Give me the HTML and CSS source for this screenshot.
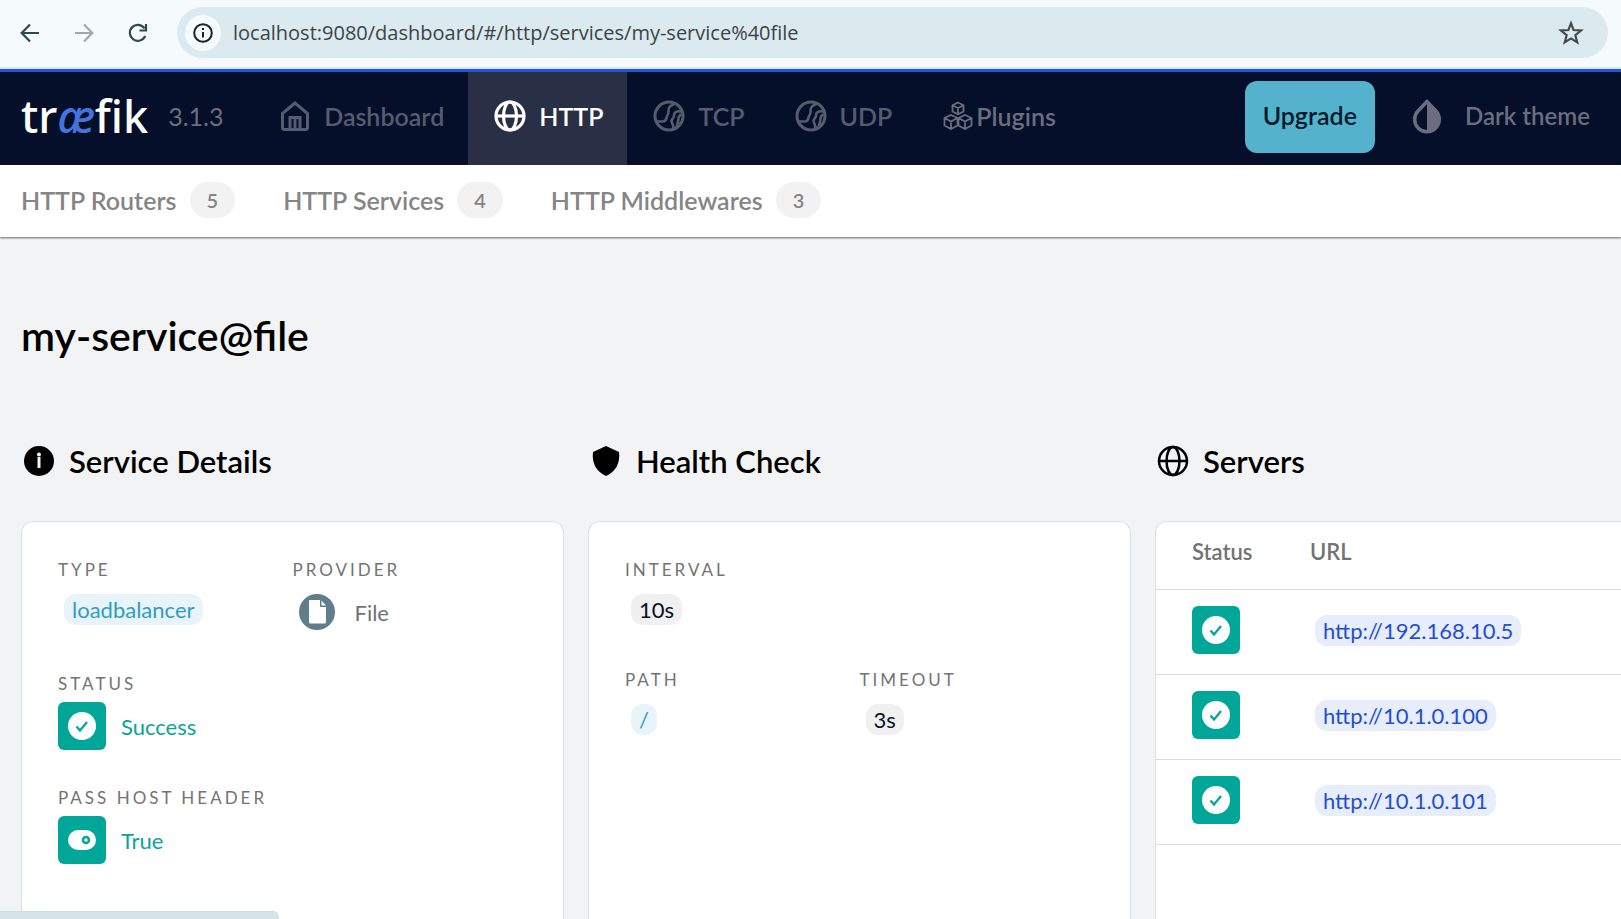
FILE: index.html
```html
<!DOCTYPE html>
<html lang="en">
<head>
<meta charset="utf-8">
<title>Traefik</title>
<link rel="stylesheet" href="styles.css">
</head>
<body>
<svg class="sprite" aria-hidden="true">
  <symbol id="globe" viewBox="0 0 32 32"><g fill="none" stroke="currentColor"><circle cx="16" cy="16" r="14"/><ellipse cx="16" cy="16" rx="6.5" ry="14"/><path d="M2 16h28"/></g></symbol>
  <symbol id="ball" viewBox="0 0 32 32"><g fill="none" stroke="currentColor" stroke-width="3"><circle cx="16" cy="16" r="14"/><path stroke-width="2.600" d="M21.500 4c-4.500 1.500-6.500 3.500-6 7s-1.500 4-1.800 6-1.700 4.500-4.200 4.500H4M28 11.500c-5-.8-7 1-7 4s-2.800 3-2.300 6 2.300 4 1.800 7.500M28.500 14.500c-3.500 1-3 4.500-3.300 6.500s-1.400 3-1.200 6"/></g></symbol>
  <symbol id="check" viewBox="0 0 28 28"><circle cx="14" cy="14" r="14" fill="#fff"/><path d="m8.500 14.500 3.500 4 7-8.500" fill="none" stroke="#00a697" stroke-width="2.200"/></symbol>
</svg>

<header class="browser">
  <button class="nav-btn" aria-label="Back"><svg viewBox="0 0 20 20"><path d="M19 10H2M10 1.500 1.700 10l8.300 8.500"/></svg></button>
  <button class="nav-btn nav-btn-off" aria-label="Forward"><svg viewBox="0 0 20 20"><path d="M1 10h17M10 1.500l8.300 8.500-8.300 8.500"/></svg></button>
  <button class="nav-btn" aria-label="Reload"><svg viewBox="0 0 20 20"><path d="M17.200 13A8 8 0 1 1 16.500 5.300M18 1v6.500h-6.500"/></svg></button>
  <div class="address">
    <button class="site-info" aria-label="Site information"><svg viewBox="0 0 20 20"><circle cx="10" cy="10" r="8.800"/><path d="M10 9v5.500M10 5v2"/></svg></button>
    <input class="url" aria-label="Address" value="localhost:9080/dashboard/#/http/services/my-service%40file">
    <button class="star" aria-label="Bookmark"><svg viewBox="0 0 24 24"><path d="m12 3 2.400 6.300 6.900.4-5.300 4.300 1.800 6.700-5.800-3.700-5.800 3.700 1.800-6.700-5.300-4.300 6.900-.4z"/></svg></button>
  </div>
</header>

<nav class="topbar">
  <div class="logo">tr<span>æ</span>fik</div>
  <div class="version">3.1.3</div>
  <a class="tab" href="#"><svg viewBox="0 0 32 32"><path d="M3.500 13.500 16 3l12.500 10.500V28a1.500 1.500 0 0 1-1.500 1.500H5A1.500 1.500 0 0 1 3.500 28zM11 29V17.500h10V29M16 19v10" fill="none" stroke="currentColor" stroke-width="3"/></svg>Dashboard</a>
  <a class="tab tab-on" href="#"><svg stroke-width="3.200"><use href="#globe"/></svg>HTTP</a>
  <a class="tab" href="#"><svg><use href="#ball"/></svg>TCP</a>
  <a class="tab" href="#"><svg><use href="#ball"/></svg>UDP</a>
  <a class="tab tab-tight" href="#"><svg viewBox="0 0 32 32"><path d="M16 2.500l5.500 2.800v6.200L16 14.300l-5.500-2.800V5.300zM10.500 5.300 16 8l5.500-2.700M16 8v6.300M9 15l6.500 3v7.500L9 29l-6.500-3.500V18zM2.500 18 9 21.500l6.500-3.500M9 21.500V29M23 15l6.500 3v7.500L23 29l-6.500-3.500V18zM16.500 18l6.500 3.500 6.500-3.500M23 21.500V29" fill="none" stroke="currentColor" stroke-width="1.800"/></svg>Plugins</a>
  <div class="spacer"></div>
  <button class="upgrade">Upgrade</button>
  <button class="theme"><svg viewBox="0 0 32 36"><path d="M16 3.500 7 13a12.300 12.300 0 1 0 18 0z" fill="none" stroke="currentColor" stroke-width="3.500"/><path d="M16 3v31c16-2 14-17 8-22z" fill="currentColor"/></svg>Dark theme</button>
</nav>

<nav class="subbar">
  <a href="#">HTTP Routers<span class="count">5</span></a>
  <a href="#">HTTP Services<span class="count">4</span></a>
  <a href="#">HTTP Middlewares<span class="count">3</span></a>
</nav>

<main class="page">
  <h1>my-service@file</h1>
  <div class="columns">
    <section class="column">
      <h2><svg viewBox="0 0 32 32"><circle cx="16" cy="16" r="15"/><path d="M14.500 13.500H16V23" fill="none" stroke="#f1f3f5" stroke-width="3"/><circle cx="16" cy="9.500" r="2" fill="#f1f3f5"/></svg>Service Details</h2>
      <dl class="card">
        <div class="field"><dt>TYPE</dt><dd><span class="chip chip-blue">loadbalancer</span></dd></div>
        <div class="field"><dt>PROVIDER</dt><dd class="provider"><svg viewBox="0 0 36 36"><circle cx="18" cy="18" r="18" fill="#607d8b"/><path d="M11 6h10v7h6v15a1.500 1.500 0 0 1-1.500 1.500H11.500A1.500 1.500 0 0 1 10 28V7a1 1 0 0 1 1-1zM22.500 6.500l4.500 5h-4.500z" fill="#fff"/></svg>File</dd></div>
        <div class="field field-wide"><dt>STATUS</dt><dd class="state"><span class="tile"><svg><use href="#check"/></svg></span>Success</dd></div>
        <div class="field field-wide"><dt>PASS HOST HEADER</dt><dd class="state"><span class="tile"><svg viewBox="0 0 28 28"><rect y="4" width="28" height="20" rx="10" fill="#fff"/><circle cx="18" cy="14" r="3" fill="none" stroke="#00a697" stroke-width="2.500"/></svg></span>True</dd></div>
      </dl>
    </section>
    <section class="column">
      <h2><svg viewBox="0 0 32 32"><path d="M16 1 29 7c1.500 11-3.500 20-13 24C6.500 27 1.500 18 3 7z"/></svg>Health Check</h2>
      <dl class="card card-short">
        <div class="field field-wide"><dt>INTERVAL</dt><dd><span class="chip">10s</span></dd></div>
        <div class="field"><dt>PATH</dt><dd><span class="chip chip-blue">/</span></dd></div>
        <div class="field"><dt>TIMEOUT</dt><dd><span class="chip">3s</span></dd></div>
      </dl>
    </section>
    <section class="column">
      <h2><svg stroke-width="2.500"><use href="#globe"/></svg>Servers</h2>
      <div class="card card-table">
        <table>
          <thead><tr><th>Status</th><th>URL</th></tr></thead>
          <tbody>
            <tr><td><span class="tile"><svg><use href="#check"/></svg></span></td><td><a class="chip chip-link" href="#">http://192.168.10.5</a></td></tr>
            <tr><td><span class="tile"><svg><use href="#check"/></svg></span></td><td><a class="chip chip-link" href="#">http://10.1.0.100</a></td></tr>
            <tr><td><span class="tile"><svg><use href="#check"/></svg></span></td><td><a class="chip chip-link" href="#">http://10.1.0.101</a></td></tr>
          </tbody>
        </table>
      </div>
    </section>
  </div>
</main>
<div class="link-status"></div>
</body>
</html>
```

FILE: styles.css
```css
* { box-sizing: border-box; }
body {
  margin: 0;
  height: 100vh;
  overflow: hidden;
  display: flex;
  flex-direction: column;
  background: #f1f3f5;
  font-family: Lato, "Open Sans", sans-serif;
  font-size: 22px;
  color: #000;
}
button, input { font: inherit; border: 0; background: none; padding: 0; }
a { color: inherit; text-decoration: none; }
svg { display: block; flex: none; }
.sprite { position: absolute; width: 0; height: 0; }

.browser {
  flex: none;
  display: flex;
  align-items: center;
  height: 69px;
  padding: 0 13px 2px 20px;
  gap: 34px;
  background: #f5fafd;
  border-bottom: 2px solid #dbe5e7;
}
.nav-btn svg { width: 20px; height: 20px; fill: none; stroke: #2f4a4e; stroke-width: 2.2; }
.nav-btn-off svg { stroke: #a2a8aa; }
.address {
  flex: 1;
  display: flex;
  align-items: center;
  height: 51px;
  margin-left: -5px;
  padding: 0 24px 0 8px;
  border-radius: 26px;
  background: #dbeaee;
}
.site-info {
  display: grid;
  place-items: center;
  width: 36px;
  height: 36px;
  border-radius: 50%;
  background: #f5fafd;
}
.site-info svg { width: 20px; height: 20px; fill: none; stroke: #1c2224; stroke-width: 2; }
.url { flex: 1; margin-left: 12px; font-family: "Open Sans", sans-serif; font-size: 20px; color: #3c4447; }
.star svg { width: 26px; height: 26px; fill: none; stroke: #414a4d; stroke-width: 2; }

.topbar {
  flex: none;
  display: flex;
  align-items: center;
  height: 96px;
  padding-right: 31px;
  border-top: 3px solid #1f55d6;
  background: #050f2a;
  color: #6a6e7e;
  font-size: 25px;
  font-weight: 600;
}
.logo { padding: 0 0 6px 21px; font-family: "Noto Sans", sans-serif; font-size: 45px; font-weight: 500; color: #fff; }
.logo span { color: #4672dd; font-style: italic; }
.version { margin-left: 20px; width: 85px; padding-bottom: 5px; font-weight: 400; }
.tab { display: flex; align-items: center; gap: 13px; height: 100%; padding: 0 24px 6px 26px; color: #565c6f; }
.tab svg { width: 32px; height: 32px; }
.tab-on { background: #293045; color: #fff; }
.tab-tight { gap: 2px; color: #6a6e7e; }
.spacer { flex: 1; }
.upgrade { height: 72px; margin-bottom: 3px; padding: 0 18px 4px; border-radius: 12px; background: #54b2cd; color: #04192b; }
.theme { display: flex; align-items: center; gap: 22px; margin: 0 0 6px 36px; color: #6a6e7e; font-size: 24px; }
.theme svg { width: 32px; height: 36px; }

.subbar {
  flex: none;
  display: flex;
  gap: 48px;
  height: 72px;
  padding: 0 21px 3px;
  background: #fff;
  box-shadow: 0 1px 2px #666;
  color: #858585;
  font-size: 25px;
  font-weight: 600;
}
.subbar a { display: flex; align-items: center; gap: 13px; }
.count {
  height: 36px;
  padding: 0 17px;
  border-radius: 18px;
  background: #f2f2f2;
  font-size: 20px;
  line-height: 36px;
}

.page { flex: 1; min-height: 0; display: flex; flex-direction: column; padding: 69px 0 0 21px; }
h1 { margin: 0; font-size: 41px; line-height: 60px; font-weight: 600; }
.columns { flex: 1; min-height: 0; display: grid; grid-template-columns: repeat(3, calc(34% - 1px)); gap: 24px; padding-top: 71px; }
.column { display: flex; flex-direction: column; }
h2 { display: flex; align-items: center; gap: 14px; height: 48px; margin: 0 0 36px; padding-left: 2px; font-size: 31px; font-weight: 600; }
h2 svg { width: 32px; height: 32px; }
.card {
  flex: 1;
  display: grid;
  grid-template-columns: 1fr 1fr;
  grid-auto-rows: 114px;
  margin: 0;
  padding: 36px;
  border: 1px solid #dedfe0;
  border-bottom: 0;
  border-radius: 12px 12px 0 0;
  background: #fff;
}
.card-short { grid-auto-rows: 110px; }
.field-wide { grid-column: 1 / -1; }
dt { font-size: 17px; line-height: 24px; letter-spacing: 3px; color: #737373; }
dd { margin: 0; }
.chip {
  display: inline-block;
  margin: 12px 6px 0;
  padding: 0 8px;
  border-radius: 12px;
  background: #f0f0f0;
  color: #050f2a;
  line-height: 31px;
}
.chip-blue { background: #e8f4f9; color: #2f9fc0; }
.chip-link { margin: 0 5px; background: #e8edfb; color: #1f4fd2; }
.provider { display: flex; align-items: center; gap: 20px; padding: 12px 6px 0; color: #737373; }
.provider svg { width: 36px; height: 36px; }
.state { display: flex; align-items: center; gap: 15px; padding-top: 6px; color: #0aa495; }
.tile { display: grid; place-items: center; width: 48px; height: 48px; border-radius: 6px; background: #00a697; }
.tile svg { width: 28px; height: 28px; }
.card-table { display: block; padding: 0; }
table { width: 100%; border-collapse: collapse; }
th, td { padding: 0 0 3px 36px; border-bottom: 1px solid #dcdcdc; text-align: left; }
th { height: 67px; padding-bottom: 7px; color: #737373; font-weight: 600; }
th:first-child { width: 118px; }
td { height: 85px; }

.link-status {
  position: fixed;
  left: 0;
  bottom: 0;
  width: 279px;
  height: 8px;
  border-top: 1px solid #cfdadc;
  border-radius: 0 6px 0 0;
  background: #d8e5e8;
}
```
